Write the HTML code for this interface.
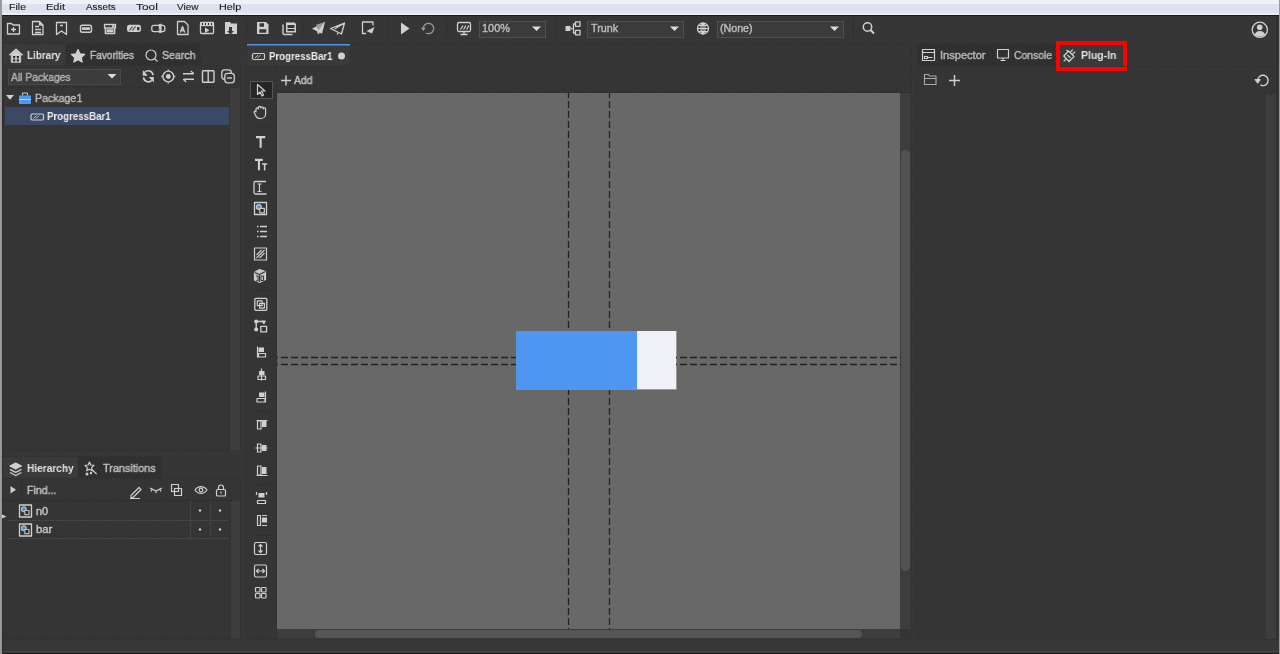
<!DOCTYPE html>
<html><head><meta charset="utf-8">
<style>
*{margin:0;padding:0;box-sizing:border-box}
html,body{width:1280px;height:654px;overflow:hidden;background:#363636;font-family:"Liberation Sans",sans-serif;}
.a{position:absolute}
.t{position:absolute;white-space:nowrap;line-height:1;transform-origin:0 0;will-change:transform}
.b{font-weight:bold}
#ov{position:absolute;left:0;top:0}
</style></head><body>
<!-- menubar -->
<div class="a" style="left:0;top:0;width:1280px;height:15px;background:#dde2ee"></div>
<div class="a" style="left:0;top:0;width:1280px;height:4px;background:#eef1f6"></div>
<div class="a" style="left:0;top:13px;width:1280px;height:2px;background:#eceef4"></div>
<div class="a" style="left:0;top:15px;width:1280px;height:1px;background:#1a1a1a"></div>
<!-- toolbar -->
<div class="a" style="left:0;top:16px;width:1280px;height:26px;background:#363636"></div>

<!-- ===== LEFT: library ===== -->
<div class="a" style="left:3px;top:44px;width:63px;height:22px;background:#3a3a3a"></div>
<div class="a" style="left:66px;top:44px;width:73px;height:22px;background:#303030"></div>
<div class="a" style="left:139px;top:44px;width:61px;height:22px;background:#303030"></div>
<div class="a" style="left:3px;top:65px;width:237px;height:386px;background:#353535"></div>
<div class="a" style="left:230px;top:88px;width:10px;height:363px;background:#3d3d3d"></div>
<div class="a" style="left:8px;top:69px;width:113px;height:16px;background:#3c3c3c;border:1px solid #4a4a4a"></div>
<div class="a" style="left:5px;top:107px;width:224px;height:18px;background:#3b4966"></div>

<!-- ===== LEFT: hierarchy ===== -->
<div class="a" style="left:3px;top:457px;width:75px;height:22px;background:#3a3a3a"></div>
<div class="a" style="left:78px;top:457px;width:83px;height:22px;background:#303030"></div>
<div class="a" style="left:3px;top:478px;width:237px;height:161px;background:#353535"></div>
<div class="a" style="left:231px;top:500px;width:9px;height:139px;background:#3d3d3d"></div>

<!-- ===== CENTER ===== -->
<div class="a" style="left:247px;top:44px;width:103px;height:21px;background:#3a3a3a"></div>
<div class="a" style="left:247px;top:44px;width:103px;height:1px;background:#4f94e8"></div>
<div class="a" style="left:247px;top:45px;width:103px;height:1px;background:#40689a"></div>
<div class="a" style="left:246px;top:65px;width:665px;height:574px;background:#353535"></div>
<div class="a" style="left:277px;top:93px;width:623px;height:536px;background:#686868"></div>
<div class="a" style="left:900px;top:93px;width:11px;height:536px;background:#3d3d3d"></div>
<div class="a" style="left:900.5px;top:150px;width:9.5px;height:421px;background:#525252;border-radius:4.5px"></div>
<div class="a" style="left:277px;top:628.5px;width:623px;height:10.5px;background:#3d3d3d"></div>
<div class="a" style="left:315px;top:630px;width:547px;height:8px;background:#555;border-radius:4px"></div>
<div class="a" style="left:250px;top:81px;width:23px;height:18px;background:#262626;border:1px solid #555"></div>
<!-- canvas objects -->
<div class="a" style="left:516px;top:331px;width:122px;height:59px;background:#4f96f0"></div>
<div class="a" style="left:637px;top:331px;width:40px;height:59px;background:#eef1f6;border-right:1px solid #9a9a9a;border-bottom:1px solid #9a9a9a"></div>

<!-- ===== RIGHT ===== -->
<div class="a" style="left:917px;top:44px;width:75px;height:22px;background:#303030"></div>
<div class="a" style="left:992px;top:44px;width:63px;height:22px;background:#303030"></div>
<div class="a" style="left:1055px;top:44px;width:66px;height:22px;background:#3a3a3a"></div>
<div class="a" style="left:917px;top:66px;width:359px;height:573px;background:#353535"></div>
<div class="a" style="left:1266px;top:94px;width:10px;height:545px;background:#3d3d3d"></div>
<div class="a" style="left:1056px;top:41px;width:71px;height:30px;border:4px solid #ff0000"></div>

<!-- status bar -->
<div class="a" style="left:0;top:640px;width:1280px;height:14px;background:#373737"></div>
<div class="a" style="left:0;top:651px;width:1280px;height:1px;background:#474747"></div>
<div class="a" style="left:0;top:653px;width:1280px;height:1px;background:#1e1e1e"></div>
<!-- edge strips -->
<div class="a" style="left:0;top:0;width:2px;height:654px;background:#9a9a9a"></div>
<div class="a" style="left:2px;top:16px;width:1px;height:638px;background:#2a2a2a"></div>
<div class="a" style="left:1276px;top:16px;width:3px;height:624px;background:#323232"></div>
<div class="a" style="left:1279px;top:0;width:1px;height:654px;background:#9a9a9a"></div>

<svg id="ov" width="1280" height="654" viewBox="0 0 1280 654">
<!-- dropdowns -->
<g>
<rect x="479.5" y="21.5" width="66" height="16" fill="#3b3b3b" stroke="#505050"/>
<rect x="587.5" y="21.5" width="96" height="16" fill="#3b3b3b" stroke="#505050"/>
<rect x="717.5" y="21.5" width="126" height="16" fill="#3b3b3b" stroke="#505050"/>
<path d="M532,26.5h9l-4.5,4.5z M670,26.5h9l-4.5,4.5z M830,26.5h9l-4.5,4.5z M107.5,74h9l-4.5,4.5z" fill="#dcdcdc"/>
</g>
<g fill="none" stroke="#d0d0d0" stroke-width="1.2" stroke-linejoin="round">
<!-- ===== toolbar icons ===== -->
<path d="M7.5,23.5h4l1.5,1.5h6.5v9h-12z M11,29.5h5 M13.5,27v5" stroke-width="1.3"/>
<path d="M32.5,21.5h7l3.5,3.5v9.5h-10.5z M39.5,21.5v3.5h3.5 M35,26.5h4 M35,29.5h6 M35,32.5h6" stroke-width="1.3"/>
<path d="M56.5,22.5h10v12l-5,-3.5l-5,3.5z M60,25.5h3" stroke-width="1.3"/>
<rect x="80.5" y="25.3" width="11" height="7" rx="1.8" stroke-width="1.4"/>
<path d="M104.5,24.5h11v3.5h-11z M105.3,28v5.5h9.4v-5.5" stroke-width="1.3"/>
<rect x="151.8" y="25.3" width="13" height="6.3" rx="2" stroke-width="1.3"/>
<path d="M177.5,21.5h7l3.5,3.5v9.5h-10.5z M180.3,32.5l2.2,-6l2.2,6 M181,30.5h3" stroke-width="1.3"/>
<rect x="200.5" y="22.5" width="13" height="11" rx="1" stroke-width="1.3"/>
<path d="M200.5,25.5h13" stroke-width="1.3"/>
<path d="M283,24.5v9l1,1h8.5" stroke-width="1.4"/>
<path d="M330.5,28.5l14,-5.5l-3,11z M334.5,29l10,-6 M337.5,31.5v3" stroke-width="1.3"/>
<path d="M373,25.5v-3.5h-10.5v11.5h3.5" stroke-width="1.3"/>
<path d="M425.9,33a5.2,5.2 0 1 0 -2.6,-4.5" stroke-width="1.3" stroke="#9a9a9a"/>
<rect x="457.5" y="22.5" width="13" height="9" rx="1.5" stroke-width="1.3"/>
<path d="M464,31.5v2.5 M460.5,34.5h7 M460.5,29.5l2.5,-4 M463.5,29.5l2.5,-4 M466.5,29.5l2.5,-4" stroke-width="1.3"/>
<path d="M575.5,21.8h4.5v4.5h-4.5z M575.5,30.3h4.5v4.5h-4.5z M570.5,28.5h2 M575.5,24h-2v9h2" stroke-width="1.3"/>
<circle cx="703" cy="28.5" r="5.5" stroke-width="1.3"/>
<path d="M697.5,28.5h11 M703,23v11 M698.5,25.5h9 M698.5,31.5h9 M703,23c-3,3 -3,8 0,11 M703,23c3,3 3,8 0,11" stroke-width="1.1"/>
<circle cx="867.5" cy="27" r="4.2" stroke-width="1.5"/>
<path d="M870.5,30l3.5,3.5" stroke-width="1.9"/>
<circle cx="1259.8" cy="29.8" r="7.6" stroke-width="1.3"/>
<!-- ===== library tools ===== -->
<path d="M153,75.2a4.9,4.9 0 0 0 -8.3,-3" stroke-width="1.6"/>
<path d="M143.5,77.4a4.9,4.9 0 0 0 8.3,3" stroke-width="1.6"/>
<path d="M142.8,70.3v5.4h5z M153.8,82.4v-5.4h-5z" fill="#d0d0d0" stroke="none"/>
<circle cx="168.3" cy="76.5" r="5.4" stroke-width="1.4"/>
<circle cx="168.3" cy="76.5" r="2.4" fill="#d0d0d0" stroke="none"/>
<path d="M168.3,69.5v1.2 M168.3,82.3v1.2 M161.3,76.5h1.2 M174.1,76.5h1.2" stroke-width="1.4"/>
<path d="M183,73.8h10.5 M183.5,79.2h10.5" stroke-width="1.5"/>
<path d="M193.8,73.8l-3,-2.8 M183.2,79.2l3,2.8" stroke-width="1.3"/>
<rect x="202.5" y="70.8" width="11.5" height="11.5" rx="0.8" stroke-width="1.4"/>
<path d="M208.2,70.8v11.5" stroke-width="1.4"/>
<rect x="221.8" y="69.8" width="9.5" height="9.5" rx="2.8" stroke-width="1.3"/>
<rect x="224.8" y="73.3" width="9.5" height="9.5" rx="2.8" fill="#353535" stroke-width="1.3"/>
<path d="M227,78h5" stroke-width="1.4"/>
<!-- ===== right tools ===== -->
<path d="M924.5,74.5h4l1,1.5h6.5v8.5h-11.5z M924.5,78.5h12" stroke="#aaa" stroke-width="1.1"/>
<path d="M954.5,75v11 M949,80.5h11" stroke-width="1.4"/>
<path d="M1260.3,84.9a5.2,5.2 0 1 0 -2.6,-4.5" stroke-width="1.4"/>
<path d="M1255.3,79.6h4.8l-2.4,3.4z" fill="#d0d0d0"/>
<!-- ===== tab icons ===== -->
<rect x="922.5" y="49.5" width="12" height="11"/>
<path d="M922.5,52.5h12 M924.5,56.5h3v2h-3z M927.5,57.5h5"/>
<path d="M997.5,49.5h11v8.5h-11z M1003,58v2.5 M1000.5,60.5h5"/>
<path d="M1063.8,56l4.8,-5l5.4,5.5l-5,5z" stroke-width="1.3"/><path d="M1070.3,52.2l2.6,-2.6 M1072.3,54.4l2.8,-2.7 M1066.2,58.8l-2.5,2.5 M1066.5,50l1.3,1.3 M1067.5,55l3,3" stroke-width="1.2"/>
<rect x="252.5" y="53.5" width="12" height="6" rx="1.2"/>
<path d="M255,58l3,-3 M257.5,58l3,-3" stroke-width="0.9"/>
<rect x="31" y="114" width="12.5" height="6" rx="1.2"/>
<path d="M33.5,118.5l3,-3 M36,118.5l3,-3" stroke-width="0.9"/>
<!-- house -->
<path d="M9.3,55.3l6.7,-6l6.7,6" stroke-width="1.4"/><path d="M11.3,54.5l4.7,-4l4.7,4v7.8h-9.4z" fill="#d0d0d0" stroke="#d0d0d0" stroke-width="0.8"/><path d="M13,56h2.3v2.3h-2.3z M16.7,56h2.3v2.3h-2.3z M13,59.3h2.3v2.3h-2.3z M16.7,59.3h2.3v2.3h-2.3z" fill="#2e2e2e" stroke="none"/>
<!-- star -->
<path d="M78,49.5l2,4.3l4.7,0.5l-3.5,3.2l1,4.6l-4.2,-2.4l-4.2,2.4l1,-4.6l-3.5,-3.2l4.7,-0.5z" fill="#cfcfcf"/>
<!-- search -->
<circle cx="151" cy="55" r="5"/>
<path d="M154.5,58.5l3,3"/>
<!-- ===== hierarchy icons ===== -->
<path d="M10,466l5.7,-3l5.7,3l-5.7,3z" fill="#d0d0d0"/><path d="M10,469.3l5.7,3l5.7,-3 M10,472.5l5.7,3l5.7,-3" stroke-width="1.3"/>
<path d="M89.5,462l1.3,3l3.2,0.4l-2.3,2.2l0.6,3.2l-2.8,-1.6l-2.8,1.6l0.6,-3.2l-2.3,-2.2l3.2,-0.4z M92.5,470l4.2,4.2"/><circle cx="87" cy="474" r="0.9" fill="#d0d0d0"/><circle cx="91" cy="473" r="0.6" fill="#d0d0d0"/>
<path d="M131,495.5l8,-8l2,2l-8,8h-2z M130,498.5h10"/>
<path d="M150,488l6,3l6,-3 M152,489.5l-1,2 M156,491v2 M160,489.5l1,2"/>
<path d="M171.5,484.5h7v7h-7z M174.5,488.5h7v7h-7z"/>
<path d="M195,490c3,-4.5 9,-4.5 12,0c-3,4.5 -9,4.5 -12,0z"/>
<circle cx="201" cy="490" r="1.8"/>
<rect x="216.5" y="489.5" width="9" height="6.5" rx="1"/>
<path d="M218.5,489.5v-2a2.5,2.5 0 0 1 5,0v2 M221,491.5v2"/>
<rect x="19.5" y="505" width="12" height="12" stroke-width="1.3"/>
<rect x="19.5" y="524" width="12" height="12" stroke-width="1.3"/>
<circle cx="23.8" cy="509.3" r="2.4" stroke="#bbb" fill="#4a8fe0"/>
<rect x="24.8" y="510.5" width="4.2" height="4.2" stroke="#bbb" fill="#2a2a2a"/>
<circle cx="23.8" cy="528.3" r="2.4" stroke="#bbb" fill="#4a8fe0"/>
<rect x="24.8" y="529.5" width="4.2" height="4.2" stroke="#bbb" fill="#2a2a2a"/>
<!-- ===== left tool column ===== -->
<path d="M257.5,84.5v10l2.5,-2.5l2,4l1.5,-1l-2,-4h3.5z"/>
<path d="M256,112v-3a1.2,1.2 0 0 1 2.4,0v-1.5a1.2,1.2 0 0 1 2.4,0v0.5a1.2,1.2 0 0 1 2.4,0v1a1.2,1.2 0 0 1 2.4,0v5a4.5,4.5 0 0 1 -4.5,4.5h-1a5,5 0 0 1 -4.5,-3l-1.5,-3a1,1 0 0 1 1.8,-0.8z"/>
<path d="M266,181.5h-10.5c-1,0 -1.5,0.5 -1.5,1.5v9.5c0,1 0.5,1.5 1.5,1.5h11" stroke-width="1.3"/>
<path d="M257.5,184h4 M259.5,184v7.5 M257.5,191.5h4" stroke-width="1.2"/>
<rect x="254.5" y="202.5" width="12" height="12" stroke-width="1.3"/>
<circle cx="258.8" cy="207" r="2.4" fill="#4a8fe0" stroke="#ccc"/>
<rect x="259.8" y="208.3" width="4.5" height="4.5" fill="#2a2a2a" stroke="#ccc"/>
<path d="M257,226.5h1.5 M260,226.5h7 M257,231.5h1.5 M260,231.5h7 M257,236.5h1.5 M260,236.5h7" stroke-width="1.6"/>
<rect x="254.5" y="248" width="12" height="12"/>
<path d="M256.5,258l8,-8 M259.5,258l5,-5 M256.5,255l5,-5"/>
<path d="M254.5,272.5l5,-3l6,2v8l-6,3l-5,-2.5z" fill="#c8c8c8"/>
<path d="M259.5,274.5v7.5 M254.5,272.5l5,2l6,-3" stroke="#353535"/>
<path d="M256,276h2v5h-2 M261,276h2.5v4.5h-2.5z" stroke="#353535" stroke-width="1"/>
<rect x="254.8" y="298.3" width="12" height="12" rx="1" stroke-width="1.3"/>
<rect x="257.3" y="300.8" width="4.8" height="4.8"/>
<rect x="259.6" y="303.3" width="4.8" height="4.8"/>
<path d="M256.2,321.5v8 M256.2,321.5h7.3" stroke-width="1.4"/>
<circle cx="256.2" cy="321.5" r="1.4" fill="#d0d0d0"/>
<circle cx="256.2" cy="329.5" r="1.4" fill="#d0d0d0"/>
<path d="M262.3,321l3,0l-1.5,2.6z" fill="#d0d0d0"/>
<rect x="260.8" y="326.3" width="5.8" height="5.6" stroke-width="1.3"/>
<!-- align icons -->
<path d="M257.5,346.5v11 M258.5,353.5h7v3.5h-7z"/>
<rect x="258.5" y="347.5" width="5.5" height="4.5" fill="#d0d0d0" stroke="none"/>
<path d="M261.5,368.5v12 M258,376h7.5v3.5h-7.5z"/>
<rect x="259" y="371" width="5.5" height="4" fill="#d0d0d0" stroke="none"/>
<path d="M265.5,391.5v11 M257,398.5h8v3.5h-8z"/>
<rect x="259" y="392.5" width="5.5" height="4.5" fill="#d0d0d0" stroke="none"/>
<path d="M256.5,420.5h11 M257.5,421v8h3.5v-8z"/>
<rect x="262" y="421" width="4.5" height="6" fill="#d0d0d0" stroke="none"/>
<path d="M255.5,448h12 M257.5,444v8h3.5v-8z"/>
<rect x="262" y="445" width="4.5" height="6" fill="#d0d0d0" stroke="none"/>
<path d="M256.5,475.5h11 M257.5,466v9h3.5v-9z"/>
<rect x="262" y="467" width="4.5" height="7" fill="#d0d0d0" stroke="none"/>
<path d="M256.5,492v3 M266.5,492v3 M257.5,500.5h8v3h-8z"/>
<rect x="258.5" y="493" width="6" height="4.5" fill="#d0d0d0" stroke="none"/>
<path d="M257.5,515.5v10h3v-10z M262,515.5h5 M262,525.5h5"/>
<rect x="262" y="517.5" width="5" height="5" fill="#d0d0d0" stroke="none"/>
<rect x="254.5" y="542.5" width="12" height="12" rx="1.5"/>
<path d="M260.5,544.5v8 M258.5,546.5l2,-2l2,2 M258.5,550.5l2,2l2,-2"/>
<rect x="254.5" y="565" width="12" height="12" rx="1.5"/>
<path d="M256.5,571h8 M258.5,569l-2,2l2,2 M262.5,569l2,2l-2,2"/>
<rect x="255.5" y="587.5" width="4.5" height="4.5" rx="0.8"/>
<rect x="261.5" y="587.5" width="4.5" height="4.5" rx="0.8"/>
<rect x="255.5" y="593.5" width="4.5" height="4.5" rx="0.8"/>
<rect x="261.5" y="593.5" width="4.5" height="4.5" rx="0.8"/>
<!-- add plus -->
<path d="M286,75.5v10 M281,80.5h10" stroke-width="1.4"/>
</g>
<g fill="#d0d0d0" stroke="none">
<path d="M401,22.5l8.5,6l-8.5,6z"/>
<rect x="82" y="27.3" width="8" height="2.6"/>
<rect x="112" y="25.3" width="2.6" height="1.8"/>
<rect x="106.5" y="29.3" width="7" height="3"/>
<rect x="127" y="24.8" width="14" height="7.2" rx="2.5"/>
<rect x="158.8" y="23.8" width="2.8" height="9.2" rx="1"/>
<path d="M200,22h14v4h-14z"/>
<path d="M312,28.8l13,-7l-3,12z M317,31.5l1,3l2,-2z"/>
<path d="M366.5,31l8,-4l-2.5,6.5z"/>
<path d="M6,95h8l-4,4.8z"/>
<path d="M10.5,486v7.5l5.5,-3.75z"/>
<path d="M256,136h9.3v2.2h-3.6v9.6h-2.1v-9.6h-3.6z"/>
<path d="M255,158.8h7.8v2.2h-2.8v9.3h-2.1v-9.3h-2.9z M262,163.3h5.2v1.5h-1.85v5.6h-1.5v-5.6h-1.85z"/>
<path d="M225,22h5l1,1.5h6v10.5h-12z"/>
<path d="M257,22h9l2.5,2.5v9.5h-11.5z"/>
<path d="M286,22.5h8.5l1.5,1.5v8.5h-10z"/>
<path d="M420.9,27.7h4.8l-2.4,3.4z" fill="#9a9a9a"/>
<rect x="565.5" y="26" width="5" height="5"/>
<path d="M205,27.5l4.5,2.7l-4.5,2.8z"/>
<circle cx="341.5" cy="56" r="3.5"/>
<circle cx="200" cy="510.5" r="1.2"/>
<circle cx="220" cy="510.5" r="1.2"/>
<circle cx="200" cy="529.5" r="1.2"/>
<circle cx="220" cy="529.5" r="1.2"/>
<path d="M2,514.5l4.5,2l-4.5,2z"/>
<circle cx="1259.7" cy="27.2" r="2.8"/>
<path d="M1254.5,34.5c1,-2.5 3,-3.5 5.3,-3.5s4.3,1 5.3,3.5c-1.5,1.5 -3.3,2 -5.3,2s-3.8,-0.5 -5.3,-2z"/>
</g>
<g fill="#363636" stroke="none">
<rect x="137" y="27" width="2.5" height="3.3"/>
<path d="M129.5,30.5l3,-4 M132.5,30.5l3,-4" stroke="#3a4460" stroke-width="1.1"/>
<path d="M202.5,23v2 M205.5,23v2 M208.5,23v2 M211.5,23v2" stroke="#222" stroke-width="1"/>
<path d="M316,24.8l8.5,-2.5l-6,8z" fill="#9a9a9a"/>
<path d="M229,27h3v4h2l-3.5,3.5l-3.5,-3.5h2z"/>
<path d="M259.5,23.3h4.5v3.5h-4.5z M259.3,29.3h7v3.5h-7z"/>
<path d="M287.5,25h7v3h-7z M287.5,29h7v2h-7z"/>
</g>
<g fill="#4a9af5" stroke="none">
<circle cx="159.5" cy="29.3" r="0.9"/>
<path d="M19,95.5h12v3.5h-12z M19,100h12v4h-12z"/>
</g>
<g fill="none" stroke="#d0d0d0" stroke-width="1">
<path d="M22.5,95.5v-2.5h5v2.5"/>
<path d="M19,99.5h12"/>
</g>
<!-- panel borders -->
<g fill="none" stroke="#2a2a2a" stroke-width="1" stroke-dasharray="1 2">
<path d="M66,65.5h174.5v385h-237.5 M3,478.5h237.5v160.5h-237.5"/>
<path d="M350,65.5h561v573.5h-665v-573.5"/>
<path d="M1121,66.5h155.5 M1276,639.5h-359.5v-572.5"/>
<path d="M276.5,65v574 M277,92.5h634 M917,94.5h359 M3,87.5h227"/>
<path d="M65.5,44v21 M139.5,44v21 M200.5,44v21 M66,43.5h134.5"/>
<path d="M78.5,457v22 M161.5,457v22 M3,456.5h158.5"/>
<path d="M917.5,43.5h137 M992.5,44v22 M1055.5,44v22"/>
<path d="M246.5,43v22 M350.5,44v21 M350,43.5h561 M911.5,43v22 M3,43.5h63"/>
</g>
<!-- dashed guides -->
<g stroke="#222" stroke-width="1.3" stroke-dasharray="7 3">
<path d="M568.5,93v238 M568.5,390v239" stroke-dashoffset="2"/>
<path d="M609.5,93v238 M609.5,390v239" stroke-dashoffset="2"/>
<path d="M277,357.5h239 M676,357.5h225" stroke-dashoffset="-4"/>
<path d="M277,364.5h239 M676,364.5h225" stroke-dashoffset="-4"/>
</g>
<!-- separators -->
<g stroke="#222" stroke-width="1" stroke-dasharray="1 2">
<path d="M246.5,19v20 M302.5,19v20 M387.5,19v20 M446.5,19v20 M555.5,19v20 M853.5,19v20"/>
<path d="M253,126.5h18 M253,290.5h18 M253,338.5h18 M253,411.5h18 M253,484.5h18 M253,535.5h18"/>
<path d="M21.5,480v20 M3,500.5h237"/></g><g stroke="#4a4a4a" stroke-width="1" stroke-dasharray="2 1"><path d="M190.5,501v38 M210.5,501v38 M8,520.5h222 M8,538.5h222"/>
</g>
</svg>
<!--TEXT-->
<div class="t" style="left:9.15px;top:2.00px;font-size:9.7px;color:#1a1a1a;transform:scaleX(1.093);-webkit-text-stroke:0.1px #1a1a1a">File</div>
<div class="t" style="left:46.12px;top:2.00px;font-size:9.7px;color:#1a1a1a;transform:scaleX(1.135);-webkit-text-stroke:0.1px #1a1a1a">Edit</div>
<div class="t" style="left:85.75px;top:2.00px;font-size:9.7px;color:#1a1a1a;transform:scaleX(1.017);-webkit-text-stroke:0.1px #1a1a1a">Assets</div>
<div class="t" style="left:135.76px;top:2.00px;font-size:9.7px;color:#1a1a1a;transform:scaleX(1.226);-webkit-text-stroke:0.1px #1a1a1a">Tool</div>
<div class="t" style="left:177.45px;top:2.00px;font-size:9.7px;color:#1a1a1a;transform:scaleX(1.033);-webkit-text-stroke:0.1px #1a1a1a">View</div>
<div class="t" style="left:219.13px;top:2.00px;font-size:9.7px;color:#1a1a1a;transform:scaleX(1.119);-webkit-text-stroke:0.1px #1a1a1a">Help</div>
<div class="t b" style="left:27.36px;top:50.00px;font-size:10.9px;color:#e2e2e2;transform:scaleX(0.906);-webkit-text-stroke:0px #e2e2e2">Library</div>
<div class="t" style="left:89.59px;top:50.00px;font-size:11px;color:#c0c0c0;transform:scaleX(0.922);-webkit-text-stroke:0.4px #c0c0c0">Favorities</div>
<div class="t" style="left:162.22px;top:50.00px;font-size:11px;color:#c0c0c0;transform:scaleX(0.961);-webkit-text-stroke:0.4px #c0c0c0">Search</div>
<div class="t" style="left:11.30px;top:72.00px;font-size:11.2px;color:#b4b4b4;transform:scaleX(0.923);-webkit-text-stroke:0.4px #b4b4b4">All Packages</div>
<div class="t" style="left:34.75px;top:93.00px;font-size:10.9px;color:#bcbcbc;transform:scaleX(0.975);-webkit-text-stroke:0.4px #bcbcbc">Package1</div>
<div class="t b" style="left:47.17px;top:111.00px;font-size:11px;color:#ececec;transform:scaleX(0.882);-webkit-text-stroke:0px #ececec">ProgressBar1</div>
<div class="t b" style="left:26.84px;top:463.00px;font-size:11px;color:#e2e2e2;transform:scaleX(0.918);-webkit-text-stroke:0px #e2e2e2">Hierarchy</div>
<div class="t" style="left:102.78px;top:463.00px;font-size:11px;color:#c0c0c0;transform:scaleX(0.985);-webkit-text-stroke:0.4px #c0c0c0">Transitions</div>
<div class="t" style="left:26.96px;top:485.00px;font-size:10.8px;color:#c4c4c4;transform:scaleX(0.977);-webkit-text-stroke:0.4px #c4c4c4">Find...</div>
<div class="t" style="left:35.59px;top:506.00px;font-size:10.6px;color:#c4c4c4;transform:scaleX(1.027);-webkit-text-stroke:0.4px #c4c4c4">n0</div>
<div class="t" style="left:35.56px;top:524.00px;font-size:10.6px;color:#c4c4c4;transform:scaleX(1.068);-webkit-text-stroke:0.4px #c4c4c4">bar</div>
<div class="t b" style="left:268.77px;top:51.00px;font-size:11px;color:#ececec;transform:scaleX(0.880);-webkit-text-stroke:0px #ececec">ProgressBar1</div>
<div class="t" style="left:294.30px;top:75.00px;font-size:10.6px;color:#c4c4c4;transform:scaleX(0.974);-webkit-text-stroke:0.4px #c4c4c4">Add</div>
<div class="t" style="left:482.18px;top:24.00px;font-size:10.4px;color:#bcbcbc;transform:scaleX(1.052);-webkit-text-stroke:0.4px #bcbcbc">100%</div>
<div class="t" style="left:590.78px;top:24.00px;font-size:10.4px;color:#bcbcbc;transform:scaleX(1.038);-webkit-text-stroke:0.4px #bcbcbc">Trunk</div>
<div class="t" style="left:719.86px;top:24.00px;font-size:10.4px;color:#bcbcbc;transform:scaleX(1.025);-webkit-text-stroke:0.4px #bcbcbc">(None)</div>
<div class="t" style="left:939.90px;top:50.00px;font-size:11px;color:#b8b8b8;transform:scaleX(1.006);-webkit-text-stroke:0.4px #b8b8b8">Inspector</div>
<div class="t" style="left:1014.28px;top:50.00px;font-size:11px;color:#b8b8b8;transform:scaleX(0.943);-webkit-text-stroke:0.4px #b8b8b8">Console</div>
<div class="t b" style="left:1080.82px;top:50.00px;font-size:11px;color:#e2e2e2;transform:scaleX(0.951);-webkit-text-stroke:0px #e2e2e2">Plug-In</div>
<!--/TEXT-->
</body></html>
